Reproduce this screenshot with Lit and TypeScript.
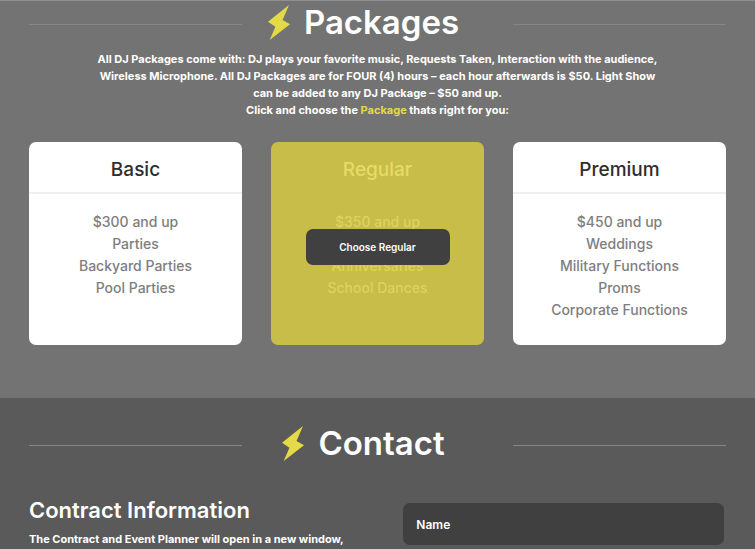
import { LitElement, html, css, svg } from "lit";
import { customElement, property } from "lit/decorators.js";

interface Package {
  name: string;
  lines: string[];
  active?: boolean;
}

const packages: Package[] = [
  { name: "Basic", lines: ["$300 and up", "Parties", "Backyard Parties", "Pool Parties"] },
  { name: "Regular", lines: ["$350 and up", "\u00a0", "Anniversaries", "School Dances"], active: true },
  { name: "Premium", lines: ["$450 and up", "Weddings", "Military Functions", "Proms", "Corporate Functions"] },
];

const bolt = svg`<polygon points="62,0 0,49 22,64 5,103 65,57 43,44" fill="#e4da48" />`;

/** Section title with a lightning bolt, flanked by two thin rules. */
@customElement("section-title")
export class SectionTitle extends LitElement {
  @property() text = "";

  static styles = css`
    :host {
      display: grid;
      grid-template-columns: repeat(3, minmax(0, 1fr));
      column-gap: 29px;
      align-items: center;
    }
    .rule {
      height: 1px;
      background: #868686;
    }
    .title {
      display: flex;
      align-items: center;
      justify-content: center;
      gap: 14px;
      margin: 0;
      padding: 0 28px 4px 0;
      font-size: 33px;
      line-height: 40px;
      font-weight: 600;
      color: #fff;
      white-space: nowrap;
    }
    .bolt {
      flex: none;
      width: 22px;
      height: 35px;
    }
  `;

  render() {
    return html`
      <div class="rule"></div>
      <h2 class="title">
        <svg class="bolt" viewBox="0 0 65 103" aria-hidden="true">${bolt}</svg>
        <span>${this.text}</span>
      </h2>
      <div class="rule"></div>
    `;
  }
}

@customElement("package-card")
export class PackageCard extends LitElement {
  @property({ attribute: false }) item!: Package;

  static styles = css`
    :host {
      display: block;
    }
    .card {
      position: relative;
      box-sizing: border-box;
      height: 100%;
      border-radius: 7px;
      background: #fff;
      text-align: center;
    }
    .name {
      margin: 0;
      padding: 16px 0 10px;
      border-bottom: 2px solid #efefef;
      font-size: 19px;
      line-height: 24px;
      font-weight: 500;
      color: #2e2e2e;
    }
    .list {
      margin: 0;
      padding: 17px 0 24px;
      list-style: none;
      font-size: 14px;
      line-height: 22px;
      font-weight: 500;
      color: #7e7e7e;
    }
    .active {
      background: #c8bd48;
    }
    .active .name {
      border-color: transparent;
      color: #e6db67;
    }
    .active .list {
      color: #ddd260;
    }
    .cover {
      position: absolute;
      inset: 6px 0 0;
      display: flex;
      align-items: center;
      justify-content: center;
    }
    .choose {
      width: 144px;
      height: 36px;
      padding: 0;
      border: 0;
      border-radius: 7px;
      background: #404040;
      font: 600 10px / 16px Inter, "Open Sans", sans-serif;
      color: #fff;
      cursor: pointer;
    }
  `;

  render() {
    const { name, lines, active } = this.item;
    return html`
      <article class="card ${active ? "active" : ""}">
        <h3 class="name">${name}</h3>
        <ul class="list">
          ${lines.map((line) => html`<li>${line}</li>`)}
        </ul>
        ${active
          ? html`<div class="cover"><button class="choose" type="button">Choose ${name}</button></div>`
          : ""}
      </article>
    `;
  }
}

@customElement("app-root")
export class AppRoot extends LitElement {
  static styles = css`
    :host {
      display: flex;
      flex-direction: column;
      min-height: 100vh;
      font-family: Inter, "Open Sans", sans-serif;
      color: #fff;
      background: #5a5a5a;
    }
    .packages {
      border-top: 1px solid #8e8e8e;
      padding: 1px 29px 53px;
      background: #737373;
    }
    .intro {
      max-width: 640px;
      margin: 5px auto 23px;
      font-size: 11px;
      line-height: 17px;
      font-weight: 700;
      text-align: center;
    }
    .accent {
      color: #e4da48;
      text-decoration: none;
    }
    .cards {
      display: grid;
      grid-template-columns: repeat(3, 1fr);
      gap: 29px;
    }
    .contact {
      flex: 1;
      padding: 25px 29px 0;
      background: #5a5a5a;
    }
    .body {
      display: grid;
      grid-template-columns: 14fr 13fr;
      gap: 29px;
      margin-top: 31px;
      padding-right: 2px;
    }
    .subtitle {
      margin: 0;
      font-size: 22px;
      line-height: 24px;
      font-weight: 600;
    }
    .note {
      margin: 9px 0 0;
      font-size: 11px;
      line-height: 17px;
      font-weight: 700;
      white-space: nowrap;
    }
    .field {
      display: block;
      box-sizing: border-box;
      width: 100%;
      height: 42px;
      margin-top: 5px;
      padding: 0 13px;
      border: 0;
      border-radius: 7px;
      background: #404040;
      font: 600 12px / 17px Inter, "Open Sans", sans-serif;
      color: #fff;
    }
    .field::placeholder {
      color: #fff;
      opacity: 1;
    }
  `;

  render() {
    return html`
      <section class="packages">
        <section-title text="Packages"></section-title>
        <p class="intro">
          All DJ Packages come with: DJ plays your favorite music, Requests Taken, Interaction with the audience,<br />
          Wireless Microphone. All DJ Packages are for FOUR (4) hours – each hour afterwards is $50. Light Show<br />
          can be added to any DJ Package – $50 and up.<br />
          Click and choose the <a class="accent" href="#packages">Package</a> thats right for you:
        </p>
        <div class="cards">
          ${packages.map((item) => html`<package-card .item=${item}></package-card>`)}
        </div>
      </section>
      <section class="contact">
        <section-title text="Contact"></section-title>
        <div class="body">
          <div>
            <h3 class="subtitle">Contract Information</h3>
            <p class="note">The Contract and Event Planner will open in a new window,</p>
          </div>
          <form>
            <input class="field" type="text" name="name" placeholder="Name" aria-label="Name" />
          </form>
        </div>
      </section>
    `;
  }
}
